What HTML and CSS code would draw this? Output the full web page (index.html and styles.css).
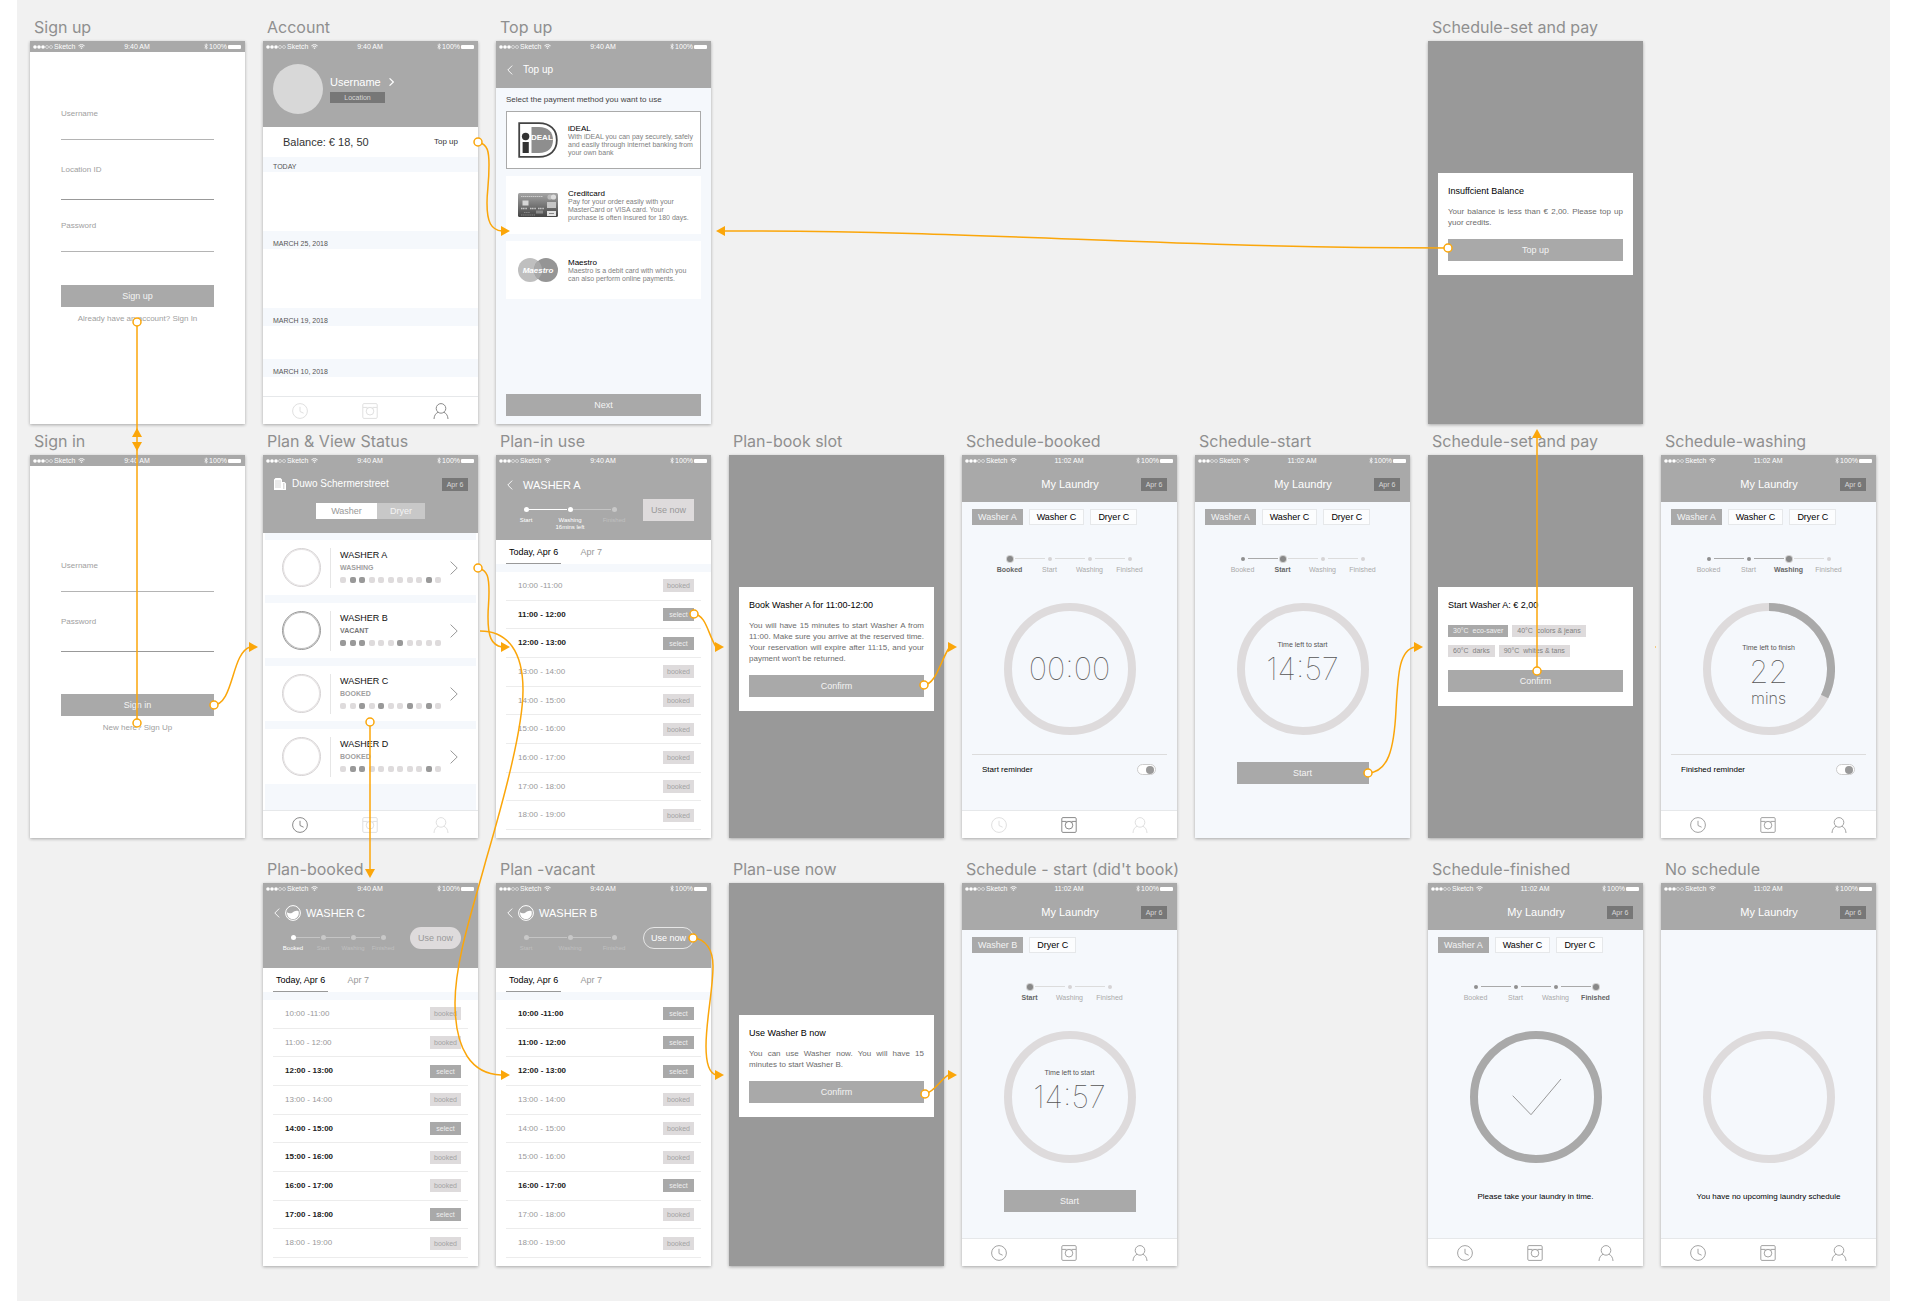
FILE: index.html
```html
<!DOCTYPE html>
<html lang="en">
<head>
<meta charset="utf-8">
<title>Laundry app – user flow</title>
<link rel="stylesheet" href="styles.css">
</head>
<body>
<svg class="sprite" aria-hidden="true">
  <symbol id="signal" viewBox="0 0 20 4"><g fill="currentColor"><circle cx="2" cy="2" r="1.8"/><circle cx="6" cy="2" r="1.8"/><circle cx="10" cy="2" r="1.8"/></g><g fill="none" stroke="currentColor" stroke-width=".5"><circle cx="14" cy="2" r="1.5"/><circle cx="18" cy="2" r="1.5"/></g></symbol>
  <symbol id="wifi" viewBox="0 0 14 10"><g fill="none" stroke="currentColor" stroke-width="1.8"><path d="M.8 3.6a9 9 0 0 1 12.4 0"/><path d="M3.2 6.1a5.6 5.6 0 0 1 7.6 0"/></g><path d="M7 10 4.8 7.8a3.2 3.2 0 0 1 4.4 0z" fill="currentColor"/></symbol>
  <symbol id="bluetooth" viewBox="0 0 8 12"><path d="M1 3.3 7 8.7 4 11.4V.6l3 2.7-6 5.4" fill="none" stroke="currentColor" stroke-width="1.4"/></symbol>
  <symbol id="clock" viewBox="0 0 16 16"><g fill="none" stroke="currentColor"><circle cx="8" cy="8" r="7.4"/><path d="M8 3.8v4.7l3.6 1.7"/></g></symbol>
  <symbol id="machine" viewBox="0 0 16 16"><g fill="none" stroke="currentColor"><rect x=".8" y=".6" width="14.4" height="14.8" rx="1.2"/><path d="M1 4.4h3.6M11.4 4.4H15M4.4 4.4 5.6 6M11.6 4.4 10.4 6"/><circle cx="8" cy="8.2" r="3.8"/><path d="M4.4 4.4h7.2" stroke-width=".6"/></g></symbol>
  <symbol id="person" viewBox="0 0 16 16"><g fill="none" stroke="currentColor"><circle cx="8" cy="5.4" r="4.8"/><path d="M1 16c.1-3.200 1.600-5.700 4.200-6.800M15 16c-.1-3.200-1.600-5.700-4.200-6.800"/></g></symbol>
  <symbol id="back" viewBox="0 0 6 10"><path d="M5.200.6.8 5l4.400 4.400" fill="none" stroke="currentColor" stroke-width=".9"/></symbol>
  <symbol id="next" viewBox="0 0 8 14"><path d="M.6.6 7.200 7 .6 13.400" fill="none" stroke="currentColor"/></symbol>
  <symbol id="building" viewBox="0 0 12 12"><path d="M0 12V1.500L1.500 0h5L8 1.500V4h2.500L12 5.500V12z" fill="#fff"/><path d="M1.500 3h1M3.500 3h1M5.500 3h1M1.500 5h1M3.500 5h1M5.500 5h1M1.500 7h1M3.500 7h1M5.500 7h1M1.500 9h1M3.500 9h1M5.500 9h1M9.200 6h1.200M9.200 8h1.200M9.200 10h1.200" stroke="#a9a9a9"/></symbol>
  <symbol id="drum" viewBox="0 0 16 16"><circle cx="8" cy="8" r="7.400" fill="none" stroke="#fff"/><path d="M2 7.200c2 1.600 3.800 1.300 5.600.2S11.200 5 13.600 6.200C14.600 10.800 11.800 14 8 14S2 11.200 2 7.200z" fill="#fff"/></symbol>
</svg>

<main class="canvas">
<div class="board">

  <section class="artboard r1 c1" id="signup">
    <h2>Sign up</h2>
    <div class="screen">
      <div class="status"><span class="carrier"><svg class="signal"><use href="#signal"/></svg>Sketch<svg class="wifi"><use href="#wifi"/></svg></span><span>9:40 AM</span><span class="power"><svg class="bt"><use href="#bluetooth"/></svg>100%<span class="battery"></span></span></div>
      <form class="auth">
        <div class="field"><label for="su-user">Username</label><input id="su-user" type="text"></div>
        <div class="field tall"><label for="su-loc">Location ID</label><input id="su-loc" type="text"></div>
        <div class="field"><label for="su-pass">Password</label><input id="su-pass" type="password"></div>
        <button type="button" class="btn">Sign up</button>
        <p>Already have an account? <a href="#signin">Sign In</a></p>
      </form>
    </div>
  </section>

  <section class="artboard r1 c2">
    <h2>Account</h2>
    <div class="screen">
      <header class="bar">
        <div class="status"><span class="carrier"><svg class="signal"><use href="#signal"/></svg>Sketch<svg class="wifi"><use href="#wifi"/></svg></span><span>9:40 AM</span><span class="power"><svg class="bt"><use href="#bluetooth"/></svg>100%<span class="battery"></span></span></div>
        <div class="profile">
          <span class="avatar"></span>
          <div>
            <a href="#profile" class="name">Username <svg class="more"><use href="#next"/></svg></a>
            <span class="place">Location</span>
          </div>
        </div>
      </header>
      <div class="balance"><span>Balance: € 18, 50</span><a href="#topup">Top up</a></div>
      <section class="day today"><h3>TODAY</h3></section>
      <section class="day"><h3>MARCH 25, 2018</h3></section>
      <section class="day brief"><h3>MARCH 19, 2018</h3></section>
      <section class="day last"><h3>MARCH 10, 2018</h3></section>
      <nav class="tabbar">
        <a href="#plan" class="off" aria-label="Plan"><svg><use href="#clock"/></svg></a>
        <a href="#laundry" class="off" aria-label="My laundry"><svg><use href="#machine"/></svg></a>
        <a href="#account" class="on" aria-label="Account"><svg><use href="#person"/></svg></a>
      </nav>
    </div>
  </section>

  <section class="artboard r1 c3" id="topup">
    <h2>Top up</h2>
    <div class="screen tint">
      <header class="bar">
        <div class="status"><span class="carrier"><svg class="signal"><use href="#signal"/></svg>Sketch<svg class="wifi"><use href="#wifi"/></svg></span><span>9:40 AM</span><span class="power"><svg class="bt"><use href="#bluetooth"/></svg>100%<span class="battery"></span></span></div>
        <div class="titlebar"><a href="#account" aria-label="Back"><svg class="back"><use href="#back"/></svg></a><span class="title small">Top up</span></div>
      </header>
      <form class="payment">
        <p>Select the payment method you want to use</p>
        <label class="method"><input type="radio" name="pay" checked>
          <svg class="logo" viewBox="0 0 40 36">
            <path d="M1.200 1.200H21c11 0 17.800 6.400 17.800 16.800S32 34.800 21 34.800H1.200z" fill="#fff" stroke="#444" stroke-width="1.800"/>
            <path d="M13.500 5H21c9 0 14 5 14 13s-5 13-14 13h-7.500z" fill="#8e8e8e"/>
            <circle cx="7.600" cy="14.500" r="3.700" fill="#333"/><path d="M4.600 20h6.200v11H4.600z" fill="#333"/>
            <text x="13" y="18" class="ideal">DEAL</text>
          </svg>
          <span class="about"><b>iDEAL</b>With iDEAL you can pay securely, safely and easily through internet banking from your own bank</span></label>
        <label class="method"><input type="radio" name="pay">
          <svg class="logo" viewBox="0 0 40 36">
            <defs><linearGradient id="cc" x2="0" y2="1"><stop stop-color="#a5a5a5"/><stop offset=".5" stop-color="#777"/><stop offset="1" stop-color="#444"/></linearGradient></defs>
            <rect y="6" width="40" height="24" rx="1.500" fill="url(#cc)"/>
            <path d="M3 9.500h22" stroke="#ccc" stroke-width="1.200" stroke-dasharray="1.500 .5"/>
            <rect x="4.500" y="13.500" width="6" height="5" fill="#d6d6d6"/>
            <path d="M3 21.500h6M12 21.500h6M20 21.500h6" stroke="#c4c4c4" stroke-width="1.500" stroke-dasharray="1.300 .4"/>
            <path d="M6 25.500h6M3 28h14" stroke="#888" stroke-dasharray="1.500 .6"/>
            <rect x="18" y="23.500" width="7" height="3" fill="#8c8c8c"/>
            <circle cx="32" cy="10" r="2.600" fill="#bbb"/><circle cx="35.500" cy="10" r="2.600" fill="#ddd"/>
            <rect x="29" y="15" width="9" height="6" fill="#c6c6c6"/><rect x="29" y="24" width="9" height="5" fill="#e2e2e2"/><path d="M31 26.500h5" stroke="#888"/>
          </svg>
          <span class="about"><b>Creditcard</b>Pay for your order easily with your MasterCard or VISA card. Your purchase is often insured for 180 days.</span></label>
        <label class="method"><input type="radio" name="pay">
          <svg class="logo" viewBox="0 0 40 36">
            <circle cx="12" cy="18" r="12" fill="#bfbfbf"/><circle cx="28" cy="18" r="12" fill="#959595"/>
            <path d="M20 9a12 12 0 0 1 0 18 12 12 0 0 1 0-18z" fill="#a8a8a8"/>
            <text x="20" y="21" text-anchor="middle" class="maestro">Maestro</text>
          </svg>
          <span class="about"><b>Maestro</b>Maestro is a debit card with which you can also perform online payments.</span></label>
        <button type="button" class="btn">Next</button>
      </form>
    </div>
  </section>

  <section class="artboard r1 c7">
    <h2>Schedule-set and pay</h2>
    <div class="screen dim">
      <div class="dialog">
        <h3>Insuffcient Balance</h3>
        <p>Your balance is less than € 2,00. Please top up yuor credits.</p>
        <button type="button" class="btn">Top up</button>
      </div>
    </div>
  </section>

  <section class="artboard r2 c1" id="signin">
    <h2>Sign in</h2>
    <div class="screen">
      <div class="status"><span class="carrier"><svg class="signal"><use href="#signal"/></svg>Sketch<svg class="wifi"><use href="#wifi"/></svg></span><span>9:40 AM</span><span class="power"><svg class="bt"><use href="#bluetooth"/></svg>100%<span class="battery"></span></span></div>
      <form class="auth low">
        <div class="field"><label for="si-user">Username</label><input id="si-user" type="text"></div>
        <div class="field tall"><label for="si-pass">Password</label><input id="si-pass" type="password"></div>
        <button type="button" class="btn">Sign in</button>
        <p>New here? <a href="#signup">Sign Up</a></p>
      </form>
    </div>
  </section>

  <section class="artboard r2 c2" id="plan">
    <h2>Plan &amp; View Status</h2>
    <div class="screen">
      <header class="bar">
        <div class="status"><span class="carrier"><svg class="signal"><use href="#signal"/></svg>Sketch<svg class="wifi"><use href="#wifi"/></svg></span><span>9:40 AM</span><span class="power"><svg class="bt"><use href="#bluetooth"/></svg>100%<span class="battery"></span></span></div>
        <div class="titlebar"><svg class="building"><use href="#building"/></svg><span class="title small">Duwo Schermerstreet</span><span class="date">Apr 6</span></div>
        <div class="segmented"><button type="button" class="current">Washer</button><button type="button">Dryer</button></div>
      </header>
      <div class="machines">
        <a href="#a" class="machine"><span class="face"></span><span class="info"><b>WASHER A</b><small>WASHING</small><span class="load"><i></i><i class="x"></i><i class="x"></i><i></i><i></i><i></i><i></i><i></i><i></i><i class="x"></i><i></i></span></span><svg class="go"><use href="#next"/></svg></a>
        <a href="#b" class="machine free"><span class="face"></span><span class="info"><b>WASHER B</b><small>VACANT</small><span class="load"><i class="x"></i><i class="x"></i><i class="x"></i><i></i><i></i><i></i><i class="x"></i><i></i><i></i><i></i><i></i></span></span><svg class="go"><use href="#next"/></svg></a>
        <a href="#c" class="machine"><span class="face"></span><span class="info"><b>WASHER C</b><small>BOOKED</small><span class="load"><i></i><i></i><i class="x"></i><i></i><i class="x"></i><i></i><i></i><i class="x"></i><i></i><i class="x"></i><i></i></span></span><svg class="go"><use href="#next"/></svg></a>
        <a href="#d" class="machine"><span class="face"></span><span class="info"><b>WASHER D</b><small>BOOKED</small><span class="load"><i></i><i class="x"></i><i class="x"></i><i></i><i></i><i></i><i></i><i></i><i></i><i class="x"></i><i></i></span></span><svg class="go"><use href="#next"/></svg></a>
      </div>
      <nav class="tabbar">
        <a href="#plan" class="on" aria-label="Plan"><svg><use href="#clock"/></svg></a>
        <a href="#laundry" class="off" aria-label="My laundry"><svg><use href="#machine"/></svg></a>
        <a href="#account" class="off" aria-label="Account"><svg><use href="#person"/></svg></a>
      </nav>
    </div>
  </section>

  <section class="artboard r2 c3" id="a">
    <h2>Plan-in use</h2>
    <div class="screen">
      <header class="bar plan">
        <div class="status"><span class="carrier"><svg class="signal"><use href="#signal"/></svg>Sketch<svg class="wifi"><use href="#wifi"/></svg></span><span>9:40 AM</span><span class="power"><svg class="bt"><use href="#bluetooth"/></svg>100%<span class="battery"></span></span></div>
        <div class="titlebar"><a href="#plan" aria-label="Back"><svg class="back"><use href="#back"/></svg></a><span class="title">WASHER A</span></div>
        <div class="progress">
          <ol class="track three"><li class="done">Start</li><li class="done">Washing 16mins left</li><li>Finished</li></ol>
          <button type="button" class="use">Use now</button>
        </div>
      </header>
      <nav class="days"><a href="#today" class="current">Today, Apr 6</a><a href="#tomorrow">Apr 7</a></nav>
      <ul class="slots">
        <li>10:00 -11:00 <button type="button" disabled>booked</button></li>
        <li class="open">11:00 - 12:00 <button type="button">select</button></li>
        <li class="open">12:00 - 13:00 <button type="button">select</button></li>
        <li>13:00 - 14:00 <button type="button" disabled>booked</button></li>
        <li>14:00 - 15:00 <button type="button" disabled>booked</button></li>
        <li>15:00 - 16:00 <button type="button" disabled>booked</button></li>
        <li>16:00 - 17:00 <button type="button" disabled>booked</button></li>
        <li>17:00 - 18:00 <button type="button" disabled>booked</button></li>
        <li>18:00 - 19:00 <button type="button" disabled>booked</button></li>
      </ul>
    </div>
  </section>

  <section class="artboard r2 c4">
    <h2>Plan-book slot</h2>
    <div class="screen dim">
      <div class="dialog">
        <h3>Book Washer A for 11:00-12:00</h3>
        <p>You will have 15 minutes to start Washer A from 11:00. Make sure you arrive at the reserved time. Your reservation will expire after 11:15, and your payment won't be returned.</p>
        <button type="button" class="btn">Confirm</button>
      </div>
    </div>
  </section>

  <section class="artboard r2 c5">
    <h2>Schedule-booked</h2>
    <div class="screen tint">
      <header class="bar">
        <div class="status"><span class="carrier"><svg class="signal"><use href="#signal"/></svg>Sketch<svg class="wifi"><use href="#wifi"/></svg></span><span>11:02 AM</span><span class="power"><svg class="bt"><use href="#bluetooth"/></svg>100%<span class="battery"></span></span></div>
        <div class="titlebar centred"><span class="title">My Laundry</span><span class="date">Apr 6</span></div>
      </header>
      <div class="laundry">
        <div class="picks"><button type="button" class="current">Washer A</button><button type="button">Washer C</button><button type="button">Dryer C</button></div>
        <ol class="steps"><li class="now">Booked</li><li>Start</li><li>Washing</li><li>Finished</li></ol>
        <div class="dial"><svg viewBox="0 0 132 132"><circle cx="66" cy="66" r="62"/></svg><div class="readout"><strong>00:00</strong></div></div>
        <label class="reminder">Start reminder<input type="checkbox" checked></label>
      </div>
      <nav class="tabbar">
        <a href="#plan" class="off" aria-label="Plan"><svg><use href="#clock"/></svg></a>
        <a href="#laundry" class="on" aria-label="My laundry"><svg><use href="#machine"/></svg></a>
        <a href="#account" class="off" aria-label="Account"><svg><use href="#person"/></svg></a>
      </nav>
    </div>
  </section>

  <section class="artboard r2 c6">
    <h2>Schedule-start</h2>
    <div class="screen tint">
      <header class="bar">
        <div class="status"><span class="carrier"><svg class="signal"><use href="#signal"/></svg>Sketch<svg class="wifi"><use href="#wifi"/></svg></span><span>11:02 AM</span><span class="power"><svg class="bt"><use href="#bluetooth"/></svg>100%<span class="battery"></span></span></div>
        <div class="titlebar centred"><span class="title">My Laundry</span><span class="date">Apr 6</span></div>
      </header>
      <div class="laundry">
        <div class="picks"><button type="button" class="current">Washer A</button><button type="button">Washer C</button><button type="button">Dryer C</button></div>
        <ol class="steps"><li class="past">Booked</li><li class="now">Start</li><li>Washing</li><li>Finished</li></ol>
        <div class="dial"><svg viewBox="0 0 132 132"><circle cx="66" cy="66" r="62"/></svg><div class="readout timed"><span>Time left to start</span><strong>14:57</strong></div></div>
        <button type="button" class="btn launch">Start</button>
      </div>
    </div>
  </section>

  <section class="artboard r2 c7">
    <h2>Schedule-set and pay</h2>
    <div class="screen dim">
      <div class="dialog">
        <h3>Start Washer A: € 2,00</h3>
        <div class="programs">
          <button type="button" class="current">30°C&nbsp; eco-saver</button><button type="button">40°C&nbsp; colors &amp; jeans</button>
          <button type="button">60°C&nbsp; darks</button><button type="button">90°C&nbsp; whites &amp; tans</button>
        </div>
        <button type="button" class="btn">Confirm</button>
      </div>
    </div>
  </section>

  <section class="artboard r2 c8">
    <h2>Schedule-washing</h2>
    <div class="screen tint">
      <header class="bar">
        <div class="status"><span class="carrier"><svg class="signal"><use href="#signal"/></svg>Sketch<svg class="wifi"><use href="#wifi"/></svg></span><span>11:02 AM</span><span class="power"><svg class="bt"><use href="#bluetooth"/></svg>100%<span class="battery"></span></span></div>
        <div class="titlebar centred"><span class="title">My Laundry</span><span class="date">Apr 6</span></div>
      </header>
      <div class="laundry">
        <div class="picks"><button type="button" class="current">Washer A</button><button type="button">Washer C</button><button type="button">Dryer C</button></div>
        <ol class="steps"><li class="past">Booked</li><li class="past">Start</li><li class="now">Washing</li><li>Finished</li></ol>
        <div class="dial"><svg viewBox="0 0 132 132"><circle cx="66" cy="66" r="62"/><path class="elapsed" d="M66 4A62 62 0 0 1 121.600 93.500"/></svg><div class="readout remaining"><span>Time left to finish</span><strong>22</strong><em>mins</em></div></div>
        <label class="reminder">Finished reminder<input type="checkbox" checked></label>
      </div>
      <nav class="tabbar">
        <a href="#plan" aria-label="Plan"><svg><use href="#clock"/></svg></a>
        <a href="#laundry" aria-label="My laundry"><svg><use href="#machine"/></svg></a>
        <a href="#account" aria-label="Account"><svg><use href="#person"/></svg></a>
      </nav>
    </div>
  </section>

  <section class="artboard r3 c2" id="c">
    <h2>Plan-booked</h2>
    <div class="screen">
      <header class="bar plan">
        <div class="status"><span class="carrier"><svg class="signal"><use href="#signal"/></svg>Sketch<svg class="wifi"><use href="#wifi"/></svg></span><span>9:40 AM</span><span class="power"><svg class="bt"><use href="#bluetooth"/></svg>100%<span class="battery"></span></span></div>
        <div class="titlebar"><a href="#plan" aria-label="Back"><svg class="back"><use href="#back"/></svg></a><svg class="drum"><use href="#drum"/></svg><span class="title">WASHER C</span></div>
        <div class="progress">
          <ol class="track four"><li class="done">Booked</li><li>Start</li><li>Washing</li><li>Finished</li></ol>
          <button type="button" class="use round">Use now</button>
        </div>
      </header>
      <nav class="days"><a href="#today" class="current">Today, Apr 6</a><a href="#tomorrow">Apr 7</a></nav>
      <ul class="slots">
        <li>10:00 -11:00 <button type="button" disabled>booked</button></li>
        <li>11:00 - 12:00 <button type="button" disabled>booked</button></li>
        <li class="open">12:00 - 13:00 <button type="button">select</button></li>
        <li>13:00 - 14:00 <button type="button" disabled>booked</button></li>
        <li class="open">14:00 - 15:00 <button type="button">select</button></li>
        <li class="open">15:00 - 16:00 <button type="button" disabled>booked</button></li>
        <li class="open">16:00 - 17:00 <button type="button" disabled>booked</button></li>
        <li class="open">17:00 - 18:00 <button type="button">select</button></li>
        <li>18:00 - 19:00 <button type="button" disabled>booked</button></li>
      </ul>
    </div>
  </section>

  <section class="artboard r3 c3" id="b">
    <h2>Plan -vacant</h2>
    <div class="screen">
      <header class="bar plan">
        <div class="status"><span class="carrier"><svg class="signal"><use href="#signal"/></svg>Sketch<svg class="wifi"><use href="#wifi"/></svg></span><span>9:40 AM</span><span class="power"><svg class="bt"><use href="#bluetooth"/></svg>100%<span class="battery"></span></span></div>
        <div class="titlebar"><a href="#plan" aria-label="Back"><svg class="back"><use href="#back"/></svg></a><svg class="drum"><use href="#drum"/></svg><span class="title">WASHER B</span></div>
        <div class="progress">
          <ol class="track three"><li>Start</li><li>Washing</li><li>Finished</li></ol>
          <button type="button" class="use round ready">Use now</button>
        </div>
      </header>
      <nav class="days"><a href="#today" class="current">Today, Apr 6</a><a href="#tomorrow">Apr 7</a></nav>
      <ul class="slots">
        <li class="open">10:00 -11:00 <button type="button">select</button></li>
        <li class="open">11:00 - 12:00 <button type="button">select</button></li>
        <li class="open">12:00 - 13:00 <button type="button">select</button></li>
        <li>13:00 - 14:00 <button type="button" disabled>booked</button></li>
        <li>14:00 - 15:00 <button type="button" disabled>booked</button></li>
        <li>15:00 - 16:00 <button type="button" disabled>booked</button></li>
        <li class="open">16:00 - 17:00 <button type="button">select</button></li>
        <li>17:00 - 18:00 <button type="button" disabled>booked</button></li>
        <li>18:00 - 19:00 <button type="button" disabled>booked</button></li>
      </ul>
    </div>
  </section>

  <section class="artboard r3 c4">
    <h2>Plan-use now</h2>
    <div class="screen dim">
      <div class="dialog">
        <h3>Use Washer B now</h3>
        <p>You can use Washer now. You will have 15 minutes to start Washer B.</p>
        <button type="button" class="btn">Confirm</button>
      </div>
    </div>
  </section>

  <section class="artboard r3 c5">
    <h2>Schedule - start (did't book)</h2>
    <div class="screen tint">
      <header class="bar">
        <div class="status"><span class="carrier"><svg class="signal"><use href="#signal"/></svg>Sketch<svg class="wifi"><use href="#wifi"/></svg></span><span>11:02 AM</span><span class="power"><svg class="bt"><use href="#bluetooth"/></svg>100%<span class="battery"></span></span></div>
        <div class="titlebar centred"><span class="title">My Laundry</span><span class="date">Apr 6</span></div>
      </header>
      <div class="laundry">
        <div class="picks"><button type="button" class="current">Washer B</button><button type="button">Dryer C</button></div>
        <ol class="steps"><li class="now">Start</li><li>Washing</li><li>Finished</li></ol>
        <div class="dial"><svg viewBox="0 0 132 132"><circle cx="66" cy="66" r="62"/></svg><div class="readout timed"><span>Time left to start</span><strong>14:57</strong></div></div>
        <button type="button" class="btn launch">Start</button>
      </div>
      <nav class="tabbar">
        <a href="#plan" aria-label="Plan"><svg><use href="#clock"/></svg></a>
        <a href="#laundry" aria-label="My laundry"><svg><use href="#machine"/></svg></a>
        <a href="#account" aria-label="Account"><svg><use href="#person"/></svg></a>
      </nav>
    </div>
  </section>

  <section class="artboard r3 c7">
    <h2>Schedule-finished</h2>
    <div class="screen tint">
      <header class="bar">
        <div class="status"><span class="carrier"><svg class="signal"><use href="#signal"/></svg>Sketch<svg class="wifi"><use href="#wifi"/></svg></span><span>11:02 AM</span><span class="power"><svg class="bt"><use href="#bluetooth"/></svg>100%<span class="battery"></span></span></div>
        <div class="titlebar centred"><span class="title">My Laundry</span><span class="date">Apr 6</span></div>
      </header>
      <div class="laundry">
        <div class="picks"><button type="button" class="current">Washer A</button><button type="button">Washer C</button><button type="button">Dryer C</button></div>
        <ol class="steps"><li class="past">Booked</li><li class="past">Start</li><li class="past">Washing</li><li class="now">Finished</li></ol>
        <div class="dial"><svg viewBox="0 0 132 132"><circle class="elapsed" cx="66" cy="66" r="62"/><path class="tick" d="M42.700 64.700 61 83.700 91 48"/></svg></div>
        <p class="note">Please take your laundry in time.</p>
      </div>
      <nav class="tabbar">
        <a href="#plan" aria-label="Plan"><svg><use href="#clock"/></svg></a>
        <a href="#laundry" aria-label="My laundry"><svg><use href="#machine"/></svg></a>
        <a href="#account" aria-label="Account"><svg><use href="#person"/></svg></a>
      </nav>
    </div>
  </section>

  <section class="artboard r3 c8">
    <h2>No schedule</h2>
    <div class="screen tint">
      <header class="bar">
        <div class="status"><span class="carrier"><svg class="signal"><use href="#signal"/></svg>Sketch<svg class="wifi"><use href="#wifi"/></svg></span><span>11:02 AM</span><span class="power"><svg class="bt"><use href="#bluetooth"/></svg>100%<span class="battery"></span></span></div>
        <div class="titlebar centred"><span class="title">My Laundry</span><span class="date">Apr 6</span></div>
      </header>
      <div class="laundry">
        <div class="dial"><svg viewBox="0 0 132 132"><circle cx="66" cy="66" r="62"/></svg></div>
        <p class="note">You have no upcoming laundry schedule</p>
      </div>
      <nav class="tabbar">
        <a href="#plan" aria-label="Plan"><svg><use href="#clock"/></svg></a>
        <a href="#laundry" aria-label="My laundry"><svg><use href="#machine"/></svg></a>
        <a href="#account" aria-label="Account"><svg><use href="#person"/></svg></a>
      </nav>
    </div>
  </section>
</div>

<!-- Prototype links between the artboards -->
<svg class="links" viewBox="17 0 1873 1301" aria-hidden="true">
  <g class="wires">
    <path d="M137 322V723"/>
    <path d="M213 705C234 705 231 653 250 647"/>
    <path d="M478 142C488 144 489 152 489 165C489 185 487 190 487 203C487 222 491 230 502 231"/>
    <path d="M1448 248C1160 248 1000 231 725 231"/>
    <path d="M478 568C488 570 489 578 489 592C489 604 488 606 488 617C488 636 491 645 502 647"/>
    <path d="M480 631C508 631 523 652 523 690C523 730 502 805 486 860C474 905 455 960 455 1003C455 1050 472 1074 501 1075"/>
    <path d="M370 722V872"/>
    <path d="M694 614C706 615 708 634 716 647"/>
    <path d="M924 685C936 684 940 662 949 648"/>
    <path d="M1368 773C1388 772 1394 750 1396 710C1398 670 1400 650 1415 647"/>
    <path d="M1537 671V436"/>
    <path d="M693 938C706 939 713 950 713 966C713 990 706 1020 706 1046C706 1062 709 1073 716 1075"/>
    <path d="M925 1094C936 1091 942 1077 949 1075"/>
  </g>
  <g class="heads">
    <path d="M137 428l5 9h-10z"/><path d="M137 451l5-9h-10z"/>
    <path d="M258 647l-9-5v10z"/><path d="M510 231l-9-5v10z"/><path d="M716 231l9-5v10z"/>
    <path d="M510 647l-9-5v10z"/><path d="M510 1075l-9-5v10z"/><path d="M370 878l5-9h-10z"/>
    <path d="M724 647l-9-5v10z"/><path d="M957 647l-9-5v10z"/><path d="M1423 647l-9-5v10z"/>
    <path d="M1656 647l-1-1v2z"/><path d="M1537 429l5 9h-10z"/><path d="M724 1075l-9-5v10z"/><path d="M957 1075l-9-5v10z"/>
  </g>
  <g class="knots">
    <circle cx="137" cy="322" r="4"/><circle cx="137" cy="723" r="4"/><circle cx="214" cy="705" r="4"/>
    <circle cx="478" cy="142" r="4"/><circle cx="1448" cy="248" r="4"/><circle cx="478" cy="568" r="4"/>
    <circle cx="370" cy="722" r="4"/><circle cx="694" cy="614" r="4"/><circle cx="924" cy="685" r="4"/>
    <circle cx="1368" cy="773" r="4"/><circle cx="1537" cy="671" r="4"/><circle cx="693" cy="938" r="4"/><circle cx="925" cy="1094" r="4"/>
  </g>
</svg>
</main>
</body>
</html>
```
FILE: styles.css
```css
:root {
  --bar: #a9a9a9;
  --tint: #f5f8fc;
  --pale: #dedbdc;
  --link: #fba60a;
}
* { box-sizing: border-box; }
body {
  margin: 0;
  background: #fff;
  font: 8px/10px "Liberation Sans", Arial, sans-serif;
  color: #222;
}
h2, h3, p, ol, ul { margin: 0; padding: 0; font-weight: 400; }
ol, ul { list-style: none; }
a { color: inherit; text-decoration: none; }
button, input { font: inherit; color: inherit; margin: 0; padding: 0; border: 0; border-radius: 0; }
svg { display: block; }
.sprite { display: none; }

.canvas {
  position: relative;
  min-width: 1873px;
  min-height: 100vh;
  margin: 0 30px 0 17px;
  background: #f1f1f1;
}
.board {
  display: grid;
  grid-template-columns: repeat(8, 215px);
  grid-template-rows: 414px 428px auto;
  column-gap: 18px;
  padding: 18px 13px 35px;
}
.links { position: absolute; left: 0; top: 0; width: 1873px; height: 1301px; pointer-events: none; }
.wires { fill: none; stroke: var(--link); stroke-width: 1.5; }
.heads { fill: var(--link); }
.knots { fill: #fff; stroke: var(--link); stroke-width: 1.5; }

.r1 { grid-row: 1; } .r2 { grid-row: 2; } .r3 { grid-row: 3; }
.c1 { grid-column: 1; } .c2 { grid-column: 2; } .c3 { grid-column: 3; } .c4 { grid-column: 4; }
.c5 { grid-column: 5; } .c6 { grid-column: 6; } .c7 { grid-column: 7; } .c8 { grid-column: 8; }

.artboard h2 {
  margin: 0 0 5px;
  padding-left: 4px;
  font: 16px/18px Inter, sans-serif;
  color: #8f8f8f;
  white-space: nowrap;
}
.screen {
  display: flex;
  flex-direction: column;
  min-height: 383px;
  background: #fff;
  box-shadow: 0 1px 3px rgba(0, 0, 0, .3);
}
.tint { background: var(--tint); }
.dim { background: #999; padding: 132px 10px 0; }
.bar { background: var(--bar); color: #fff; }

/* status bar */
.status {
  display: grid;
  grid-template-columns: 1fr auto 1fr;
  align-items: center;
  height: 11px;
  padding: 0 4px 0 3px;
  background: var(--bar);
  color: #fff;
  font-size: 7px;
}
.carrier, .power { display: flex; align-items: center; gap: 1px; }
.power { justify-content: flex-end; }
.signal { width: 20px; height: 4px; }
.wifi { width: 7px; height: 5px; margin-left: 2px; }
.bt { width: 4px; height: 7px; }
.battery { width: 13px; height: 4px; border-radius: 1px; background: #fff; }

.titlebar { display: flex; align-items: center; height: 36px; padding: 0 10px 0 11px; }
.title { font-size: 11px; line-height: 14px; }
.title.small { font-size: 10px; }
.back { width: 6px; height: 10px; margin-right: 10px; }
.building { width: 12px; height: 12px; margin-right: 6px; }
.drum { width: 16px; height: 16px; margin: 0 5px 0 -5px; }
.date {
  width: 26px;
  margin-left: auto;
  background: #777;
  color: #d8d8d8;
  font-size: 7px;
  line-height: 13px;
  text-align: center;
}
.centred { display: grid; grid-template-columns: 26px 1fr 26px; }
.centred .title { grid-column: 2; text-align: center; }

.btn {
  display: block;
  width: 100%;
  background: var(--bar);
  color: #f4f4f4;
  font-size: 9px;
  line-height: 22px;
}

/* sign up, sign in */
.auth { padding: 57px 31px 0; color: #a0a0a0; }
.auth.low { padding-top: 95px; }
.field { min-height: 56px; }
.field label { display: block; }
.field input { display: block; width: 100%; height: 21px; border-bottom: 1px solid #b4b4b4; background: none; }
.field.tall input { height: 25px; border-color: #999; }
.auth .btn { margin-top: 8px; }
.auth.low .btn { margin-top: 21px; }
.auth p { margin-top: 7px; text-align: center; }

/* account */
.profile { display: flex; align-items: center; gap: 7px; padding: 12px 10px 13px; }
.avatar { width: 50px; height: 50px; border-radius: 50%; background: #d8d8d8; }
.name { display: flex; align-items: center; font-size: 11px; line-height: 14px; margin-bottom: 3px; }
.more { width: 5px; height: 8px; margin-left: 8px; stroke-width: 2; }
.place { display: block; width: 55px; background: #777; color: #d8d8d8; font-size: 7px; line-height: 11px; text-align: center; }
.balance { display: flex; align-items: center; justify-content: space-between; height: 30px; padding: 0 20px; color: #333; }
.balance span { font-size: 11px; }
.day { min-height: 77px; }
.day h3 { padding: 8px 10px 0; background: var(--tint); color: #555; font-size: 7px; }
.today { min-height: 74px; }
.today h3 { padding-top: 5px; }
.brief { min-height: 51px; }
.last { min-height: 0; }

.tabbar {
  display: grid;
  grid-template-columns: repeat(3, 1fr);
  align-items: center;
  justify-items: center;
  height: 28px;
  margin-top: auto;
  padding: 0 2px;
  border-top: 1px solid #e6e8ea;
  background: #fff;
  color: #a3a3a3;
}
.tabbar svg { width: 16px; height: 16px; }
.tabbar .on { color: #8a8a8a; }
.tabbar .off { color: #e0e0e0; }

/* top up */
.payment { display: flex; flex: 1; flex-direction: column; gap: 7px; padding: 7px 10px 8px; }
.payment p { color: #444; line-height: 9px; }
.payment > .btn { margin-top: auto; }
.method {
  display: flex;
  align-items: center;
  min-height: 58px;
  padding: 0 6px 0 11px;
  border: 1px solid #fff;
  background: #fff;
}
.method input { position: absolute; opacity: 0; }
.method:has(:checked) { border-color: #aaa; }
.logo { flex: none; width: 40px; height: 36px; margin-right: 10px; }
.about { color: #808080; font-size: 7px; line-height: 8px; }
.about b { display: block; color: #000; font-size: 8px; line-height: 9px; font-weight: 400; }
.ideal { fill: #fff; font: bold 8px "Liberation Sans", Arial, sans-serif; }
.maestro { fill: #fff; font: italic bold 8px "Liberation Sans", Arial, sans-serif; }

/* dialogs */
.dialog { padding: 12px 10px 14px; background: #fff; }
.dialog h3 { color: #000; font-size: 9px; line-height: 12px; }
.dialog p { margin: 9px 0 11px; color: #6c6c6c; line-height: 11px; text-align: justify; }
.programs { display: flex; flex-wrap: wrap; gap: 8px 4px; margin: 14px 0 13px; }
.programs button { padding: 0 5px; background: var(--pale); color: #808080; font-size: 7px; line-height: 12px; }
.programs .current { background: var(--bar); color: #f0f0f0; }

/* plan and view status */
.segmented { display: flex; justify-content: center; padding: 1px 0 14px; font-size: 9px; line-height: 16px; }
.segmented button { width: 48px; background: #c8c8c8; color: #f4f4f4; }
.segmented .current { width: 61px; background: #fff; color: #999; }
.machines { display: flex; flex: 1; flex-direction: column; gap: 8px; margin: 0 2px; padding-top: 7px; background: var(--tint); }
.machine { display: flex; align-items: center; height: 55px; padding: 0 18px 0 17px; background: #fff; }
.face { width: 39px; height: 39px; border: 1px solid #d5d2d3; border-radius: 50%; box-shadow: inset 0 0 0 1px #e6e3e4; }
.free .face { border-color: #999; box-shadow: inset 0 0 0 1px #bbb; }
.info { display: grid; align-content: center; width: 110px; height: 40px; margin-left: 9px; padding-left: 9px; border-left: 1px solid #e6e6e6; }
.info b { font-size: 9px; line-height: 13px; font-weight: 400; color: #111; }
.info small { font-size: 7px; line-height: 12px; font-weight: 700; color: #a0a0a0; }
.free small { color: #777; }
.load { display: flex; justify-content: space-between; width: 101px; padding: 3px 0; }
.load i { width: 6px; height: 6px; border-radius: 2px; background: var(--pale); }
.load .x { background: #999; }
.go { width: 8px; height: 14px; margin-left: auto; color: #999; }

/* machine plan */
.plan .titlebar { height: 33px; padding-top: 4px; }
.progress { display: flex; height: 41px; }
.track { display: grid; margin-top: 7px; font-size: 6px; line-height: 7px; text-align: center; }
.three { grid-template-columns: repeat(3, 44px); padding-left: 8px; }
.four { grid-template-columns: repeat(4, 30px); padding-left: 15px; }
.track li { position: relative; color: #c0c0c0; }
.track li::before {
  content: "";
  display: block;
  width: 5px;
  height: 5px;
  margin: 1px auto 5px;
  border-radius: 50%;
  background: #c8c8c8;
}
.track li + li::after {
  content: "";
  position: absolute;
  top: 3px;
  right: calc(50% + 3px);
  width: calc(100% - 6px);
  border-top: 1px solid #c4c4c4;
}
.track .done { color: #fff; }
.track .done::before { background: #fff; }
.track .done + .done::after { border-color: #fff; }
.use { width: 51px; height: 22px; margin: 0 17px 0 auto; background: var(--pale); color: #999; font-size: 9px; line-height: 20px; }
.round { border-radius: 11px; }
.ready { border: 1px solid #e6e6e6; background: none; color: #fff; }

.days { display: flex; gap: 16px; height: 24px; padding: 0 10px; color: #999; font-size: 9px; line-height: 24px; }
.days a { padding: 0 3px; }
.days .current { border-bottom: 1px solid #999; color: #000; }
.slots {
  display: flex;
  flex: 1;
  flex-direction: column;
  padding: 0 10px 8px;
  border-top: 8px solid var(--tint);
}
.slots li {
  display: flex;
  flex: 1;
  align-items: center;
  justify-content: space-between;
  padding: 0 7px 0 12px;
  border-bottom: 1px solid #ececec;
  color: #999;
}
.slots .open { color: #222; font-weight: 700; }
.slots button { width: 31px; background: var(--bar); color: #eee; font-size: 7px; line-height: 13px; font-weight: 400; }
.slots button:disabled { background: var(--pale); color: #a3a3a3; }

/* my laundry */
.laundry { display: grid; flex: 1; grid-template-rows: 51px 50px 132px 1fr; padding: 0 10px; }
.picks { display: flex; gap: 6px; align-items: flex-start; padding-top: 7px; font-size: 9px; }
.picks button { padding: 0 7px; border: 1px solid #e6e8ea; background: #fcfdfe; color: #000; line-height: 14px; }
.picks .current { padding: 0 5px; border-color: var(--bar); background: var(--bar); color: #f4f4f4; }
.steps { display: grid; grid-auto-columns: 40px; grid-auto-flow: column; justify-content: center; color: #aaa; font-size: 7px; line-height: 9px; text-align: center; }
.steps li { position: relative; }
.steps li::before {
  content: "";
  display: block;
  width: 4px;
  height: 4px;
  margin: 4px auto;
  border-radius: 50%;
  background: #d6d4d5;
}
.steps li + li::after {
  content: "";
  position: absolute;
  top: 5px;
  right: calc(50% + 5px);
  width: 30px;
  border-top: 1px solid #dcdcdc;
}
.steps .past::before { background: #8f8f8f; }
.steps .past + li::after { border-color: #a9a9a9; }
.steps .now { color: #666; font-weight: 700; }
.steps .now::before { width: 6px; height: 6px; margin: 3px auto; background: #888; box-shadow: 0 0 0 1px #cfcfcf; }
.dial { display: grid; grid-row: 3; justify-content: center; }
.dial > * { grid-area: 1 / 1; }
.dial svg { width: 132px; height: 132px; fill: none; stroke: var(--pale); stroke-width: 8; }
.dial .elapsed { stroke: var(--bar); }
.dial .tick { stroke: #999; stroke-width: 1; }
.readout { display: flex; flex-direction: column; align-items: center; justify-content: center; color: #555; font-size: 7px; }
.readout strong { font: 100 31px/38px Inter, sans-serif; }
.readout em { font: 200 16px/14px Inter, sans-serif; }
.timed { padding-bottom: 10px; }
.remaining { padding-top: 10px; }
.reminder {
  display: flex;
  align-items: center;
  justify-content: space-between;
  align-self: start;
  height: 30px;
  margin-top: 19px;
  padding: 0 11px 0 10px;
  border-top: 1px solid #dcdcdc;
  color: #000;
}
.reminder input {
  appearance: none;
  display: flex;
  align-items: center;
  justify-content: flex-end;
  width: 19px;
  height: 11px;
  padding: 0 1px;
  border: 1px solid #ccc;
  border-radius: 6px;
  background: #fff;
}
.reminder input::before { content: ""; width: 8px; height: 8px; border-radius: 50%; background: #999; }
.launch { width: 132px; margin: 27px auto 0; align-self: start; }
.note { grid-row: 4; margin-top: 29px; color: #000; text-align: center; }
```
